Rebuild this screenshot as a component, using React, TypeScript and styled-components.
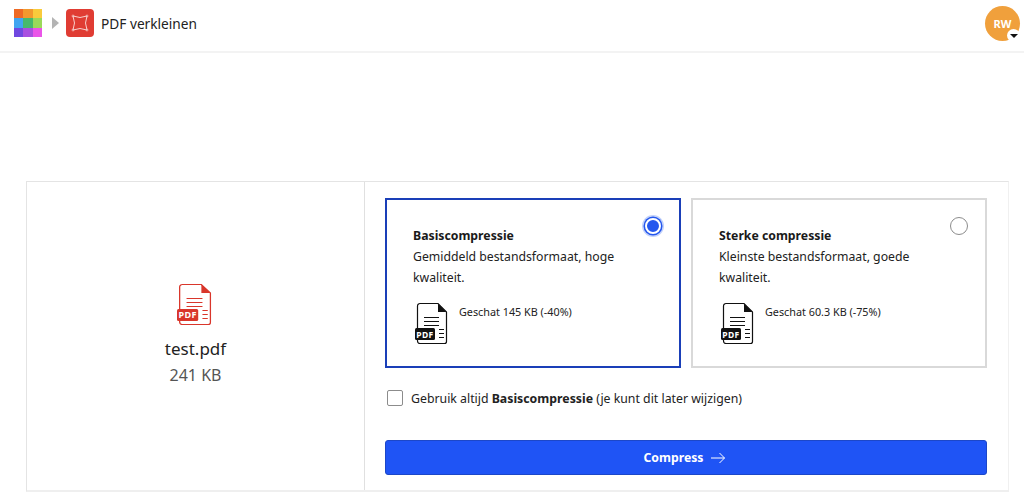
import React from "react";
import styled, { createGlobalStyle } from "styled-components";

const Global = createGlobalStyle`
  html, body { margin: 0; padding: 0; background: #fff; }
  body { font-family: "Noto Sans", "Open Sans", sans-serif; color: #1a1a1a; }
  * { box-sizing: border-box; }
`;
const Page = styled.div`width: 1024px; height: 501px; overflow: hidden; display: flex; flex-direction: column;`;
const Header = styled.header`height: 53px; flex: none; display: flex; align-items: center; padding: 0 4px 5px 14px; border-bottom: 2px solid #f3f3f3;`;
const Logo = styled.div`width: 28px; height: 28px; display: grid; grid-template-columns: repeat(3, 1fr); grid-template-rows: repeat(3, 1fr);`;
const Cell = styled.span<{ $c: string }>`background: ${p => p.$c};`;
const Chevron = styled.span`width: 0; height: 0; margin: 0 7px 0 10px; border-left: 7px solid #b4b4b4; border-top: 6px solid transparent; border-bottom: 6px solid transparent;`;
const AppIcon = styled.div`width: 28px; height: 28px; border-radius: 4px; background: #e03c33; display: flex; align-items: center; justify-content: center;`;
const Title = styled.div`margin-left: 7px; font-size: 13.7px; color: #222;`;
const Avatar = styled.div`position: relative; margin-left: auto; width: 35px; height: 35px; border-radius: 50%; background: #f0a03c; color: #fff; font-size: 11px; font-weight: 700; display: flex; align-items: center; justify-content: center; margin-top: 1px;`;
const Caret = styled.span`position: absolute; right: 0; bottom: -1px; width: 13px; height: 13px; border-radius: 50%; background: #fff; display: flex; align-items: center; justify-content: center; &::after { content: ""; border-left: 4px solid transparent; border-right: 4px solid transparent; border-top: 4px solid #111; }`;
const Panel = styled.main`margin: 128px 0 0 26px; width: 983px; height: 311px; display: flex; border: 1px solid #e4e4e4; border-right-color: #f0f0f0; border-bottom: 2px solid #efefef;`;
const FileCol = styled.section`width: 338px; flex: none; border-right: 1px solid #e0e0e0; display: flex; flex-direction: column; align-items: center; padding-top: 101px;`;
const FileGlyph = styled.div`margin-right: 2px; height: 43px;`;
const FileName = styled.div`margin-top: 11px; font-size: 17px; line-height: 24px; color: #222;`;
const FileSize = styled.div`margin-top: 2px; font-size: 16px; line-height: 24px; color: #555;`;
const OptionsCol = styled.section`flex: 1; padding: 16px 22px 0 20px; display: flex; flex-direction: column;`;
const Cards = styled.div`display: flex; gap: 10px;`;
const Card = styled.div<{ $on?: boolean }>`position: relative; width: 296px; height: 170px; border: 2px solid ${p => (p.$on ? "#1a3fb8" : "#d9d9d9")}; padding: 28px 26px 0 26px;`;
const Radio = styled.span<{ $on?: boolean }>`position: absolute; top: 17px; right: 17px; width: 18px; height: 18px; border-radius: 50%; ${p => p.$on
  ? "background: #2457ee; border: 2px solid #fff; box-shadow: 0 0 0 1.5px #2457ee, 0 0 0 3px #c3d2fa; top: 18px; right: 18px; width: 16px; height: 16px;"
  : "border: 1px solid #8c8c8c; background: #fff;"}`;
const CardTitle = styled.div`font-size: 12.25px; font-weight: 700; line-height: 16px; color: #1a1a1a;`;
const CardText = styled.div`font-size: 12.25px; line-height: 21px; margin-top: 2px; color: #222; width: 230px;`;
const Estimate = styled.div`display: flex; margin-top: 14px; gap: 11px; margin-left: 2px;`;
const EstimateText = styled.div`font-size: 10.8px; line-height: 16px; margin-top: 2px; color: #222;`;
const CheckRow = styled.label`display: flex; align-items: center; margin: 22px 0 0 2px; height: 16px; font-size: 12.3px; color: #222; gap: 8px;`;
const Box = styled.span`width: 16px; height: 16px; border: 1px solid #8c8c8c; border-radius: 2px; flex: none;`;
const Button = styled.button`margin-top: 34px; height: 35px; width: 602px; padding: 0 4px 0 0; background: #1f54f5; border: 1px solid #1c47c8; border-radius: 3px; color: #fff; font-family: inherit; font-size: 12.25px; font-weight: 700; display: flex; align-items: center; justify-content: center; gap: 7px;`;

const colors = ["#ee6a25", "#f2992e", "#f9cb3c", "#41a5f0", "#46b96c", "#9bd95a", "#7048e0", "#a94fe0", "#ea55e8"];

const PdfIcon = ({ color, width }: { color: string; width: number }) => (
  <svg width={width} height="43" viewBox="0 0 33 43" fill="none" preserveAspectRatio="none">
    <path d="M2.500 4a2.500 2.500 0 0 1 2.500-2.500h18l8.500 8.500v29.500a2 2 0 0 1-2 2h-24.500a2.500 2.500 0 0 1-2.500-2.500z" fill="#fff" stroke={color} strokeWidth="1.200" />
    <path d="M23 1.500v8.500h8.500z" fill={color} />
    <path d="M9 15.500h15M9 19.500h15M9 23.500h15M24 27.500h5M24 31.500h5M24 35.500h5" stroke={color} strokeWidth="1.200" />
    <rect x="0" y="26" width="20" height="12" rx="1.500" fill={color} />
    <text x="10" y="35.500" textAnchor="middle" fontFamily="'Noto Sans', sans-serif" fontSize="8.500" fontWeight="700" fill="#fff" letterSpacing="0.4">PDF</text>
  </svg>
);

export default function App() {
  return (
    <Page>
      <Global />
      <Header>
        <Logo>{colors.map(c => <Cell key={c} $c={c} />)}</Logo>
        <Chevron />
        <AppIcon>
          <svg width="20" height="20" viewBox="0 0 20 20" fill="none" stroke="#f7cfcc" strokeWidth="1">
            <path d="M3 3Q10 6 17 3Q14 10 17 17Q10 14 3 17Q6 10 3 3z" />
            <path d="M1.500 3h3M3 1.500v3M15.500 3h3M17 1.500v3M1.500 17h3M3 15.500v3M15.500 17h3M17 15.500v3" strokeWidth="0.700" />
          </svg>
        </AppIcon>
        <Title>PDF verkleinen</Title>
        <Avatar>RW<Caret /></Avatar>
      </Header>
      <Panel>
        <FileCol>
          <FileGlyph><PdfIcon color="#d9362b" width={35} /></FileGlyph>
          <FileName>test.pdf</FileName>
          <FileSize>241 KB</FileSize>
        </FileCol>
        <OptionsCol>
          <Cards>
            <Card $on>
              <Radio $on />
              <CardTitle>Basiscompressie</CardTitle>
              <CardText>Gemiddeld bestandsformaat, hoge kwaliteit.</CardText>
              <Estimate>
                <PdfIcon color="#111" width={33} />
                <EstimateText>Geschat 145 KB (-40%)</EstimateText>
              </Estimate>
            </Card>
            <Card>
              <Radio />
              <CardTitle>Sterke compressie</CardTitle>
              <CardText>Kleinste bestandsformaat, goede kwaliteit.</CardText>
              <Estimate>
                <PdfIcon color="#111" width={33} />
                <EstimateText>Geschat 60.3 KB (-75%)</EstimateText>
              </Estimate>
            </Card>
          </Cards>
          <CheckRow>
            <Box />
            <span>Gebruik altijd <b>Basiscompressie</b> (je kunt dit later wijzigen)</span>
          </CheckRow>
          <Button>
            Compress
            <svg width="14" height="12" viewBox="0 0 14 12" fill="none" stroke="#fff" strokeWidth="1"><path d="M0 6h13.500M8.500 1l5 5-5 5" /></svg>
          </Button>
        </OptionsCol>
      </Panel>
    </Page>
  );
}
